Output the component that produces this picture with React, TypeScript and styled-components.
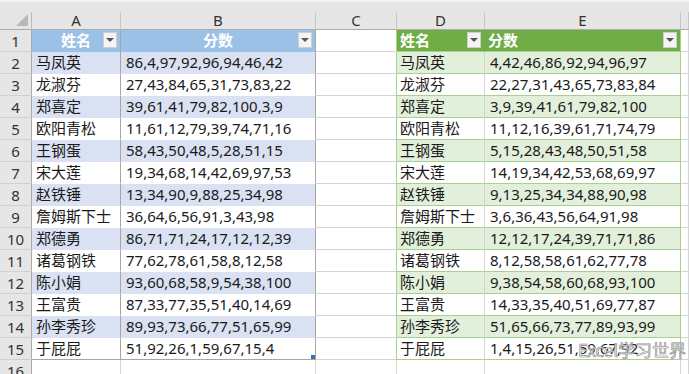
import styled, { createGlobalStyle } from "styled-components";

const GlobalStyle = createGlobalStyle`
    html, body {
        margin: 0;
        padding: 0;
        background: #ffffff;
        overflow: hidden;
    }
    body {
        font-family: "Noto Sans", "Noto Sans CJK SC", sans-serif;
    }
`;

const Sheet = styled.div`
    position: relative;
    width: 689px;
    height: 374px;
    overflow: hidden;
    display: grid;
    grid-template-columns: 32px 89px 195px 81px 88px 196px 8px;
    grid-auto-rows: 22px;
    grid-template-rows: 12px 18px;
    font-size: 15px;
    color: #1a1a1a;
`;

const TopStrip = styled.div`
    grid-column: 1 / -1;
    background: #e6e6e6;
    border-top: 2px solid #f3f3f3;
    box-sizing: border-box;
`;

const Corner = styled.div`
    background: #e6e6e6;
    border-right: 1px solid #bdbdbd;
    border-bottom: 1px solid #ababab;
    position: relative;
    &::after {
        content: "";
        position: absolute;
        right: 3px;
        bottom: 3px;
        width: 0;
        height: 0;
        border-left: 12px solid transparent;
        border-bottom: 12px solid #b8b8b8;
    }
`;

const ColHead = styled.div`
    background: #e6e6e6;
    border-right: 1px solid #c6c6c6;
    border-bottom: 1px solid #ababab;
    display: flex;
    align-items: center;
    justify-content: center;
    font-size: 15px;
    color: #333;
    line-height: 1;
`;

const RowHead = styled.div`
    background: #e6e6e6;
    border-right: 1px solid #ababab;
    border-bottom: 1px solid #d0d0d0;
    display: flex;
    align-items: center;
    justify-content: center;
    font-size: 15px;
    color: #333;
`;

type CellProps = {
    $bg?: string;
    $right?: string;
    $bottom?: string;
    $left?: string;
    $align?: "left" | "center";
    $head?: boolean;
    $pad?: number;
};

const Cell = styled.div<CellProps>`
    position: relative;
    box-sizing: border-box;
    background: ${(p) => p.$bg || "#ffffff"};
    border-right: 1px solid ${(p) => p.$right || "#d4d4d4"};
    border-bottom: 1px solid ${(p) => p.$bottom || "#d4d4d4"};
    ${(p) => (p.$left ? `border-left: 1px solid ${p.$left};` : "")}
    display: flex;
    align-items: center;
    justify-content: ${(p) => (p.$align === "center" ? "center" : "flex-start")};
    padding-left: ${(p) => (p.$align === "center" ? 0 : p.$pad ?? 4)}px;
    padding-right: ${(p) => (p.$align === "center" ? 0 : 2)}px;
    white-space: nowrap;
    overflow: hidden;
    font-weight: ${(p) => (p.$head ? 700 : 400)};
    color: ${(p) => (p.$head ? "#ffffff" : "#1a1a1a")};
    line-height: 1;
`;

const FilterBtn = styled.span`
    position: absolute;
    right: 3px;
    top: 2px;
    width: 14px;
    height: 16px;
    box-sizing: border-box;
    background: #f4f4f4;
    border: 1px solid #cfcfcf;
    display: flex;
    align-items: center;
    justify-content: center;
    &::after {
        content: "";
        width: 0;
        height: 0;
        border-left: 4px solid transparent;
        border-right: 4px solid transparent;
        border-top: 4px solid #555;
    }
`;

const ResizeHandle = styled.span`
    position: absolute;
    right: 0;
    bottom: 0;
    width: 4px;
    height: 4px;
    background: #2f6fb5;
`;

const Watermark = styled.div`
    position: absolute;
    left: 578px;
    top: 337px;
    font-family: "Noto Sans CJK SC", sans-serif;
    font-size: 17px;
    color: rgba(255, 255, 255, 0.85);
    -webkit-text-stroke: 0.7px #8c8c8c;
    letter-spacing: 0px;
    pointer-events: none;
`;

const rows: [string, string][] = [
    ["马凤英", "86,4,97,92,96,94,46,42"],
    ["龙淑芬", "27,43,84,65,31,73,83,22"],
    ["郑喜定", "39,61,41,79,82,100,3,9"],
    ["欧阳青松", "11,61,12,79,39,74,71,16"],
    ["王钢蛋", "58,43,50,48,5,28,51,15"],
    ["宋大莲", "19,34,68,14,42,69,97,53"],
    ["赵铁锤", "13,34,90,9,88,25,34,98"],
    ["詹姆斯下士", "36,64,6,56,91,3,43,98"],
    ["郑德勇", "86,71,71,24,17,12,12,39"],
    ["诸葛钢铁", "77,62,78,61,58,8,12,58"],
    ["陈小娟", "93,60,68,58,9,54,38,100"],
    ["王富贵", "87,33,77,35,51,40,14,69"],
    ["孙李秀珍", "89,93,73,66,77,51,65,99"],
    ["于屁屁", "51,92,26,1,59,67,15,4"],
];

const sorted = (s: string) =>
    s
        .split(",")
        .map(Number)
        .sort((a, b) => a - b)
        .join(",");

const BLUE_HEAD = "#9bc2e6";
const BLUE_BAND = "#d9e1f2";
const BLUE_LINE = "#a6a6a6";
const GREEN_HEAD = "#70ad47";
const GREEN_BAND = "#e2efda";
const GREEN_LINE = "#a9d08e";

function App() {
    return (
        <Sheet>
            <GlobalStyle />
            <TopStrip />
            <Corner />
            {["A", "B", "C", "D", "E", ""].map((c, i) => (
                <ColHead key={i}>{c}</ColHead>
            ))}

            <RowHead>1</RowHead>
            <Cell $bg={BLUE_HEAD} $right={BLUE_LINE} $bottom={BLUE_HEAD} $align="center" $head>
                姓名
                <FilterBtn />
            </Cell>
            <Cell $bg={BLUE_HEAD} $right={BLUE_LINE} $bottom={BLUE_HEAD} $align="center" $head>
                分数
                <FilterBtn />
            </Cell>
            <Cell $right={GREEN_LINE} />
            <Cell $bg={GREEN_HEAD} $right={GREEN_HEAD} $bottom={GREEN_LINE} $head $pad={3}>
                姓名
                <FilterBtn />
            </Cell>
            <Cell $bg={GREEN_HEAD} $right={GREEN_LINE} $bottom={GREEN_LINE} $head $pad={3}>
                分数
                <FilterBtn />
            </Cell>
            <Cell />

            {rows.map(([name, nums], i) => {
                const band = i % 2 === 0;
                const last = i === rows.length - 1;
                const lb = band ? BLUE_BAND : "#ffffff";
                const gb = band ? GREEN_BAND : "#ffffff";
                return [
                    <RowHead key={`h${i}`}>{i + 2}</RowHead>,
                    <Cell key={`a${i}`} $bg={lb} $right={BLUE_LINE} $bottom={last ? BLUE_LINE : lb}>
                        {name}
                    </Cell>,
                    <Cell key={`b${i}`} $bg={lb} $right={BLUE_LINE} $bottom={last ? BLUE_LINE : lb} $pad={5}>
                        {nums}
                        {last && <ResizeHandle />}
                    </Cell>,
                    <Cell key={`c${i}`} $right={GREEN_LINE} />,
                    <Cell key={`d${i}`} $bg={gb} $right="#d4d4d4" $bottom={GREEN_LINE} $pad={3}>
                        {name}
                    </Cell>,
                    <Cell key={`e${i}`} $bg={gb} $right={GREEN_LINE} $bottom={GREEN_LINE} $pad={5}>
                        {sorted(nums)}
                    </Cell>,
                    <Cell key={`f${i}`} />,
                ];
            })}

            <RowHead>16</RowHead>
            {[0, 1, 2, 3, 4, 5].map((c) => (
                <Cell key={`r16${c}`} />
            ))}

            <Watermark>Excel学习世界</Watermark>
        </Sheet>
    );
}

export default App;
